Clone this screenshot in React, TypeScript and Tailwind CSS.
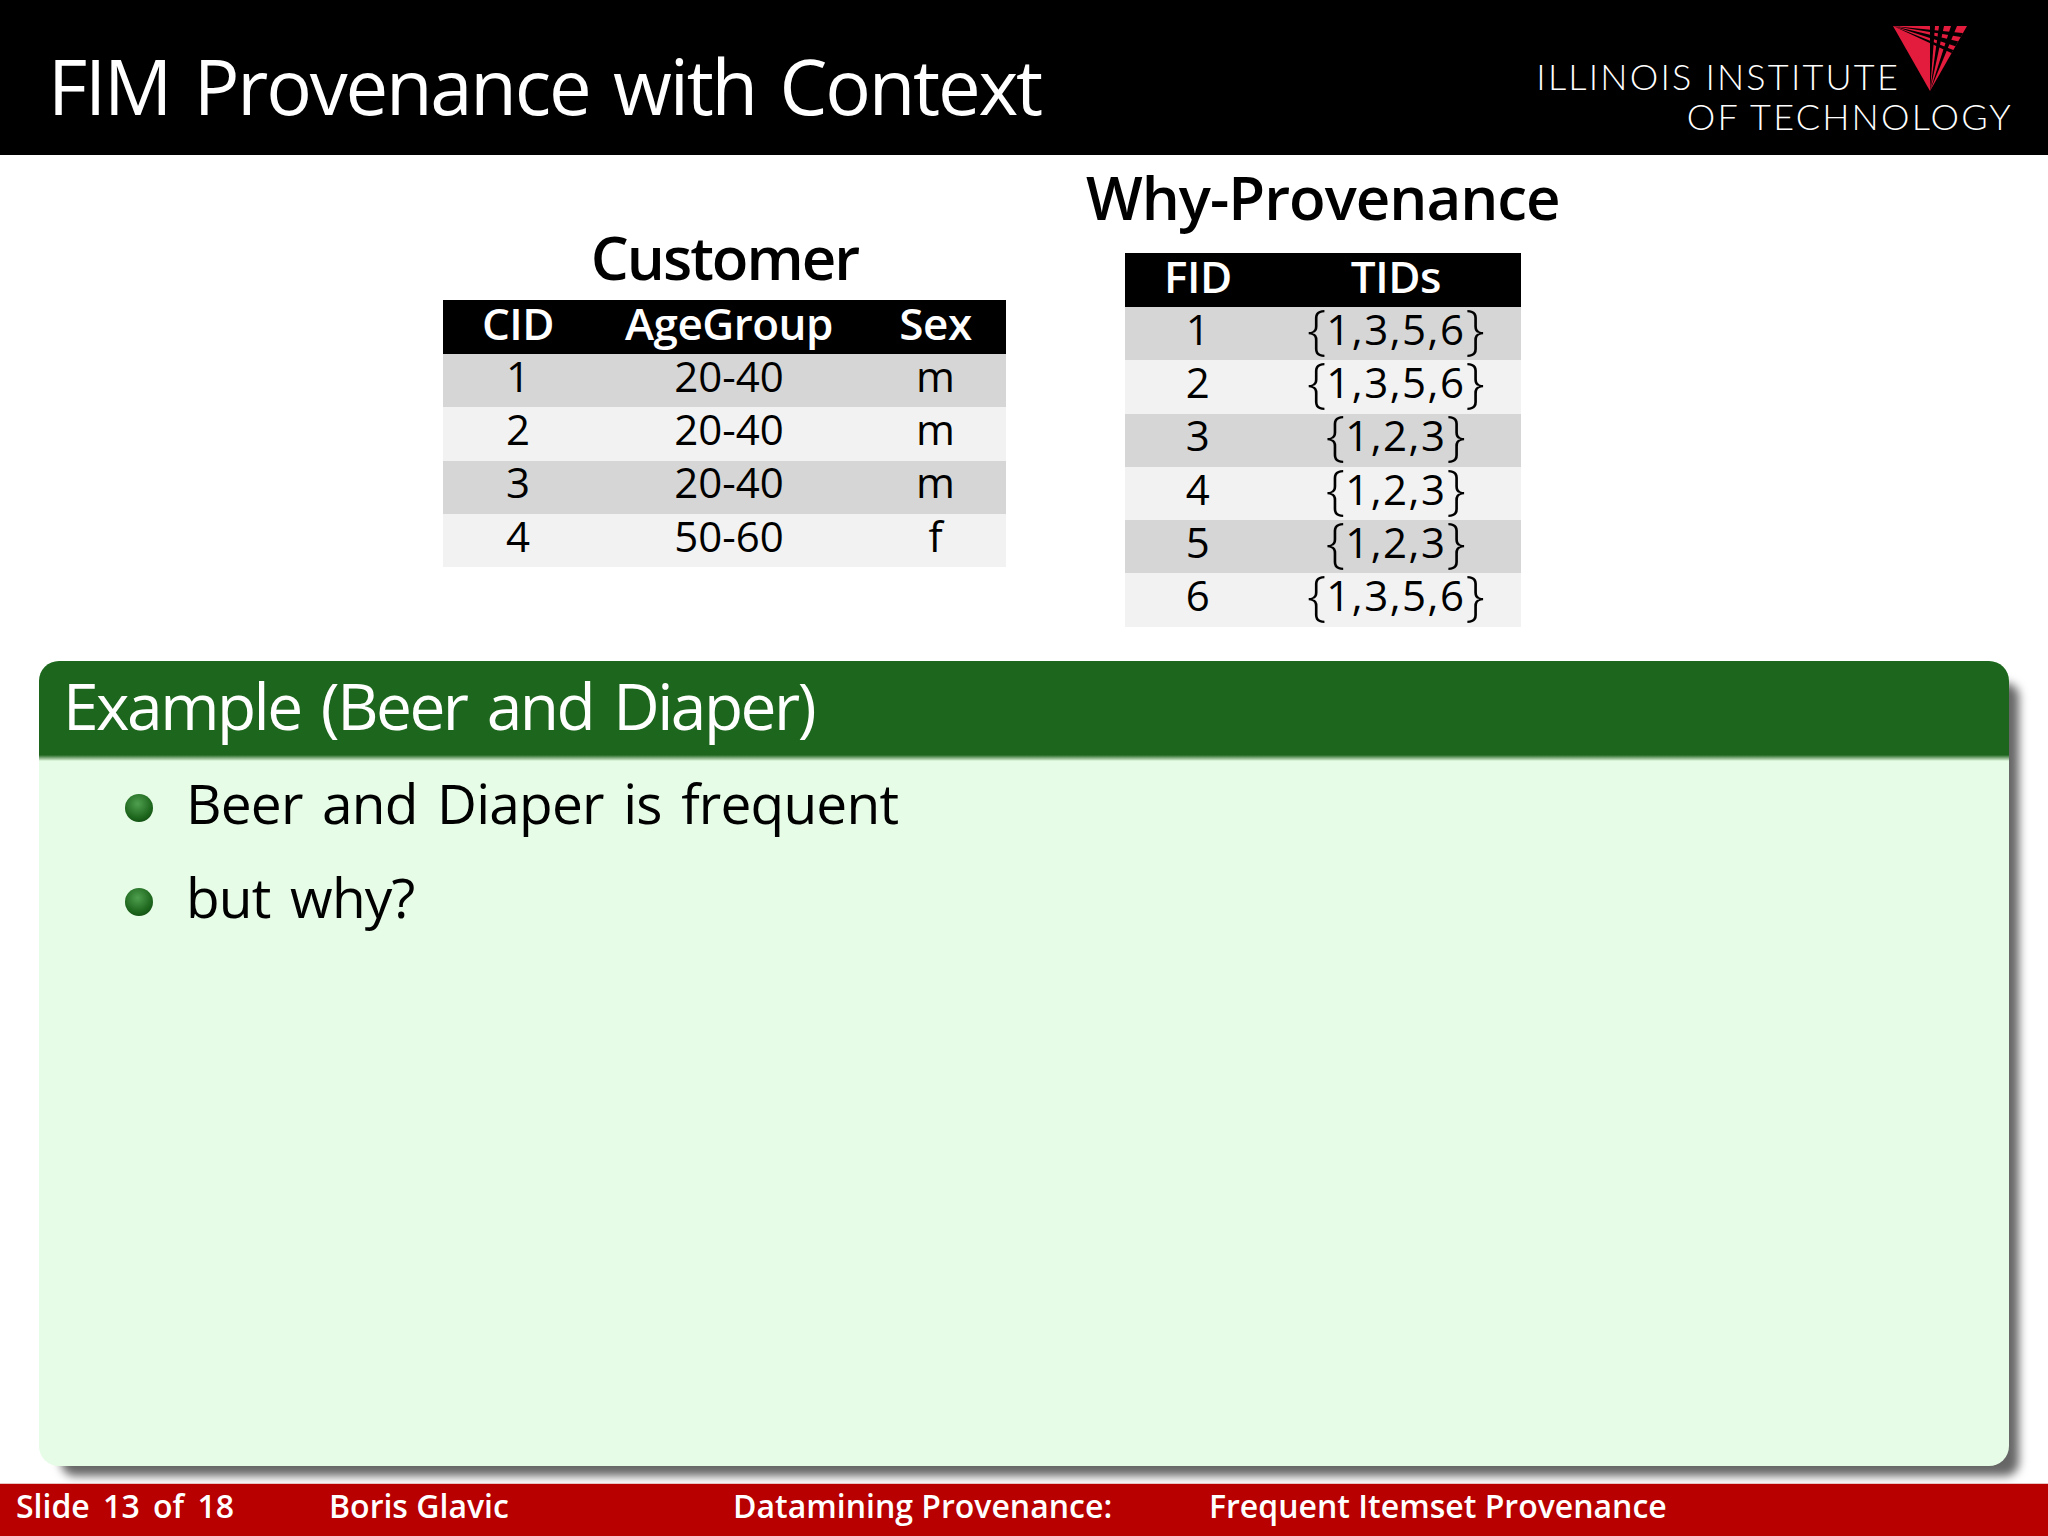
const customer = [
  ['1', '20-40', 'm'],
  ['2', '20-40', 'm'],
  ['3', '20-40', 'm'],
  ['4', '50-60', 'f'],
];

const whyProvenance = [
  ['1', '1,3,5,6'],
  ['2', '1,3,5,6'],
  ['3', '1,2,3'],
  ['4', '1,2,3'],
  ['5', '1,2,3'],
  ['6', '1,3,5,6'],
];

function Logo() {
  return (
    <svg viewBox="0 0 74 65" className="absolute top-[26px] right-[81px] h-[65px] w-[74px]">
      <defs>
        <clipPath id="tri">
          <polygon points="0,0 74,0 37,65" />
        </clipPath>
      </defs>
      <g clipPath="url(#tri)">
        <rect width="74" height="65" fill="#e31c3d" />
        <polygon points="0,0 80,8 80,13" fill="#000" />
        <polygon points="0,0 80,19 80,26" fill="#000" />
        <polygon points="0,0 80,32 80,37" fill="#000" />
        <polygon points="37,65 37,0 42,0" fill="#000" />
        <polygon points="37,65 46,0 51,0" fill="#000" />
        <polygon points="37,65 58,0 64,0" fill="#000" />
      </g>
    </svg>
  );
}

function Brace({ children }: { children: string }) {
  return <span className="align-[-3px] text-[54px] leading-[0] font-light">{children}</span>;
}

function DataTable({ head, rows, widths, sets }: { head: string[]; rows: string[][]; widths: string[]; sets?: boolean }) {
  return (
    <table className="table-fixed border-collapse">
      <thead>
        <tr className="h-[54px] bg-black text-white">
          {head.map((h, i) => (
            <th key={h} className={`p-0 pb-[8px] text-center text-[44px] leading-none font-semibold tracking-[-0.5px] ${widths[i]}`}>
              {h}
            </th>
          ))}
        </tr>
      </thead>
      <tbody>
        {rows.map((row, r) => (
          <tr key={r} className={`h-[53.3px] ${r % 2 === 0 ? 'bg-[#d6d6d6]' : 'bg-[#f2f2f2]'}`}>
            {row.map((cell, i) => (
              <td key={i} className="p-0 pb-[10px] text-center text-[42px] leading-none text-black">
                {sets && i === 1 ? (
                  <>
                    <Brace>{'{'}</Brace>
                    <span className="tracking-[1.5px]">{cell}</span>
                    <Brace>{'}'}</Brace>
                  </>
                ) : (
                  cell
                )}
              </td>
            ))}
          </tr>
        ))}
      </tbody>
    </table>
  );
}

function Bullet({ children }: { children: string }) {
  return (
    <li className="flex h-[94px] items-center gap-[33px]">
      <span className="h-[28px] w-[28px] rounded-full bg-[radial-gradient(circle_at_45%_35%,#4f9f4f,#1d661d_60%,#0a3a0a)]" />
      <span className="pb-[12px] text-[55px] leading-none tracking-[-0.8px] [word-spacing:6px] text-black">{children}</span>
    </li>
  );
}

export default function App() {
  return (
    <div className="flex h-[1536px] w-[2048px] flex-col overflow-hidden bg-white font-['Open_Sans',sans-serif]">
      {/* Title bar */}
      <header className="flex h-[155px] shrink-0 items-center justify-between bg-black pl-[48px] text-white">
        <h1 className="pt-[16px] text-[76px] leading-none tracking-[-2.2px] [word-spacing:6px]">FIM Provenance with Context</h1>
        <div className="relative flex h-full flex-col items-end pr-[35px] pt-[56px] font-['Lato',sans-serif] font-light">
          <div className="mr-[113px] text-[36px] leading-[40px] tracking-[2.2px]">ILLINOIS INSTITUTE</div>
          <div className="text-[36px] leading-[40px] tracking-[2.2px]">OF TECHNOLOGY</div>
          <Logo />
        </div>
      </header>

      {/* Tables */}
      <main className="flex h-[506px] shrink-0 items-start pl-[443px]">
        <section className="mt-[75px] flex w-[563px] flex-col items-center">
          <h2 className="h-[70px] text-[60px] leading-[54px] font-semibold tracking-[-2px] text-black">Customer</h2>
          <DataTable
            head={['CID', 'AgeGroup', 'Sex']}
            rows={customer}
            widths={['w-[150px]', 'w-[272px]', 'w-[141px]']}
          />
        </section>
        <section className="mt-[28px] ml-[80px] flex flex-col items-center">
          <h2 className="h-[70px] text-[60px] leading-[28px] font-semibold tracking-[-1px] whitespace-nowrap text-black">
            Why-Provenance
          </h2>
          <DataTable head={['FID', 'TIDs']} rows={whyProvenance} widths={['w-[146px]', 'w-[250px]']} sets />
        </section>
      </main>

      {/* Example block */}
      <section className="ml-[39px] flex h-[805px] w-[1970px] shrink-0 flex-col rounded-[20px] bg-[#e6fce6] shadow-[16px_16px_10px_-6px_rgba(0,0,0,0.6)]">
        <div className="flex h-[94px] items-center rounded-t-[20px] bg-[#1d661d] pb-[4px] pl-[24px] text-[64px] leading-none tracking-[-2.5px] [word-spacing:6px] text-white">
          Example (Beer and Diaper)
        </div>
        <div className="h-[6px] bg-gradient-to-b from-[#1d661d] to-[#e6fce6]" />
        <ul className="pl-[86px]">
          <Bullet>Beer and Diaper is frequent</Bullet>
          <Bullet>but why?</Bullet>
        </ul>
      </section>

      {/* Footer */}
      <footer className="mt-[17px] flex h-[53px] shrink-0 items-center border-t border-[#e9c4c4] bg-[#b80000] pb-[8px] text-[32px] leading-none font-semibold text-white">
        <span className="w-[329px] pl-[16px] [word-spacing:5px]">Slide 13 of 18</span>
        <span className="w-[404px]">Boris Glavic</span>
        <span className="w-[476px]">Datamining Provenance:</span>
        <span>Frequent Itemset Provenance</span>
      </footer>
    </div>
  );
}
